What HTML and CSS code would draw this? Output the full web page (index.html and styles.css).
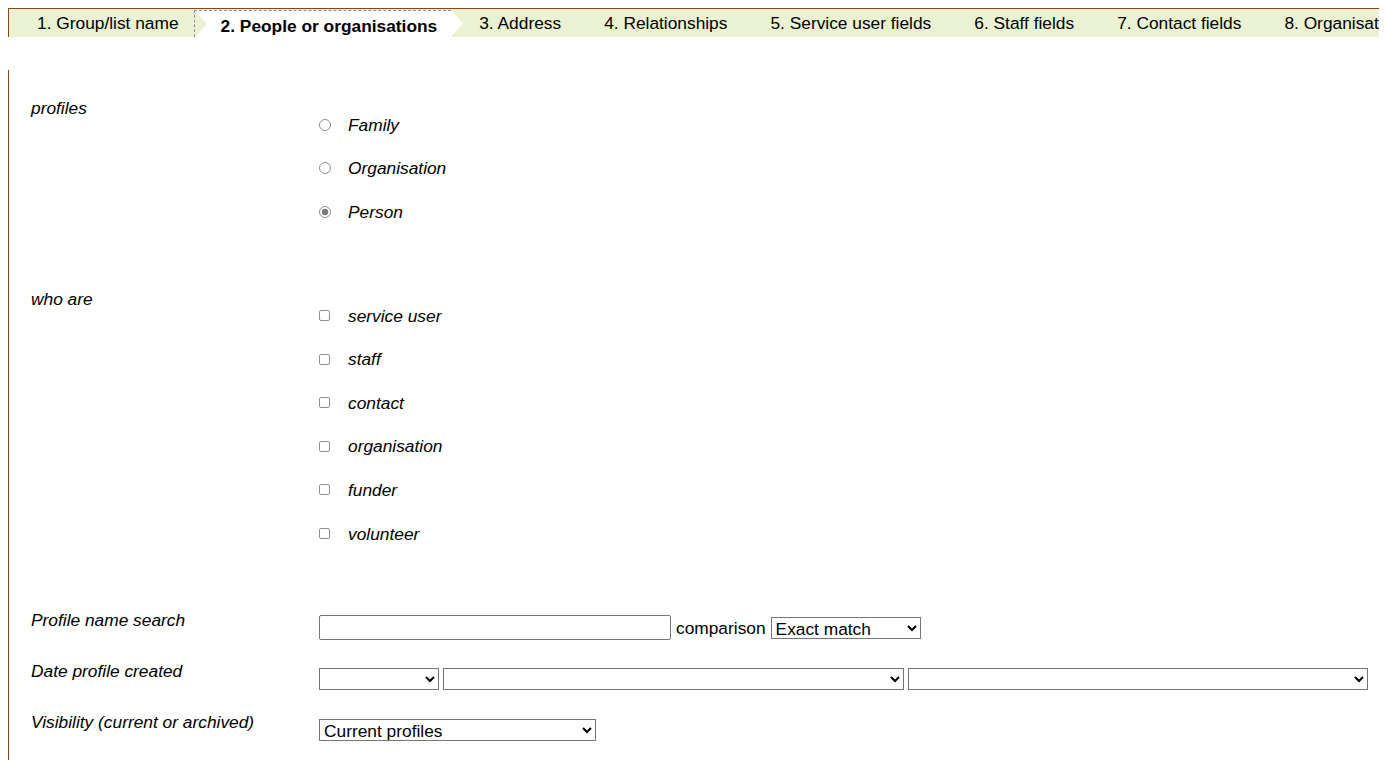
FILE: index.html
```html
<!DOCTYPE html>
<html lang="en">
<head>
<meta charset="utf-8">
<title>People or organisations</title>
<link rel="stylesheet" href="styles.css">
</head>
<body>
<nav class="tabs">
  <ul class="tab-list">
    <li class="tab prev">1. Group/list name</li>
    <li class="tab active">2. People or organisations</li>
    <li class="tab">3. Address</li>
    <li class="tab">4. Relationships</li>
    <li class="tab">5. Service user fields</li>
    <li class="tab">6. Staff fields</li>
    <li class="tab">7. Contact fields</li>
    <li class="tab">8. Organisation fields</li>
  </ul>
</nav>

<form class="content">
  <div class="section">
    <div class="section-label">profiles</div>
    <div class="options">
      <label class="option"><input type="radio" name="profile" class="radio"> Family</label>
      <label class="option"><input type="radio" name="profile" class="radio"> Organisation</label>
      <label class="option"><input type="radio" name="profile" class="radio" checked> Person</label>
    </div>
  </div>

  <div class="section">
    <div class="section-label">who are</div>
    <div class="options">
      <label class="option"><input type="checkbox" class="check"> service user</label>
      <label class="option"><input type="checkbox" class="check"> staff</label>
      <label class="option"><input type="checkbox" class="check"> contact</label>
      <label class="option"><input type="checkbox" class="check"> organisation</label>
      <label class="option"><input type="checkbox" class="check"> funder</label>
      <label class="option"><input type="checkbox" class="check"> volunteer</label>
    </div>
  </div>

  <div class="row">
    <div class="section-label">Profile name search</div>
    <div class="controls controls-search">
      <input type="text" class="text-input">
      <span class="inline-text">comparison</span>
      <select class="sel sel-compare"><option>Exact match</option><option>Starts with</option><option>Contains</option></select>
    </div>
  </div>

  <div class="row">
    <div class="section-label">Date profile created</div>
    <div class="controls controls-select">
      <select class="sel sel-date-a"><option></option></select>
      <select class="sel sel-date-b"><option></option></select>
      <select class="sel sel-date-c"><option></option></select>
    </div>
  </div>

  <div class="row">
    <div class="section-label">Visibility (current or archived)</div>
    <div class="controls controls-select">
      <select class="sel sel-visibility"><option>Current profiles</option><option>Archived profiles</option></select>
    </div>
  </div>
</form>
</body>
</html>
```

FILE: styles.css
```css
html {
  overflow: hidden;
}

body {
  margin: 8px;
  font-family: "Liberation Sans", Arial, sans-serif;
  font-size: 13pt;
  color: #000;
  background: #fff;
}

/* ---------- tab strip ---------- */
.tabs {
  width: calc(100vw - 8px);
}

.tab-list {
  display: flex;
  list-style: none;
  margin: 0;
  padding: 0;
  height: 28px;
  background: #eaf2d3;
  border-top: 1px solid #8b4513;
  border-left: 1px solid #8b4513;
  white-space: nowrap;
  overflow: hidden;
}

.tab {
  position: relative;
  flex: none;
  padding: 4px 15px 0 28px;
  line-height: 20px;
}

.tab.active {
  background: #fff;
  font-weight: bold;
  margin-top: 1px;
  border-top: 1px dashed #8a8a8a;
  border-left: 1px dashed #8a8a8a;
  padding: 5px 14px 0 26px;
}

.tab.prev::after {
  content: "";
  position: absolute;
  left: calc(100% + 1px);
  top: 2px;
  border-left: 12px solid #eaf2d3;
  border-top: 13px solid transparent;
  border-bottom: 13px solid transparent;
  z-index: 2;
}

.tab.active::after {
  content: "";
  position: absolute;
  left: 100%;
  top: -1px;
  border-left: 12px solid #fff;
  border-top: 13px solid transparent;
  border-bottom: 14px solid transparent;
  z-index: 2;
}

/* ---------- form ---------- */
.content {
  margin: 33px 0 0;
  border-left: 1px solid #8b4513;
  padding: 28px 0 40px 22px;
}

.section {
  display: grid;
  grid-template-columns: 288px 1fr;
  margin-bottom: 55px;
}

.section-label {
  font-style: italic;
  line-height: 20px;
}

.options {
  margin-top: 5px;
  display: flex;
  flex-direction: column;
}

.option {
  display: flex;
  align-items: center;
  height: 43.6px;
  font-style: italic;
  line-height: 20px;
}

.radio,
.check {
  appearance: none;
  -webkit-appearance: none;
  flex: none;
  margin: 0 17px 0 0;
  width: 12px;
  height: 12px;
  border: 1px solid #8f8f8f;
  background: #fff;
}

.radio {
  border-radius: 50%;
}

.radio:checked {
  background: radial-gradient(circle, #7a7a7a 0 3px, #fff 3.6px);
}

.check {
  width: 11px;
  height: 11px;
  margin-right: 18px;
  border-radius: 2px;
}

.check:checked {
  background: #7a7a7a;
}

.row {
  display: grid;
  grid-template-columns: 288px 1fr;
  height: 51px;
}

.controls {
  display: flex;
  align-items: center;
}

.controls-search {
  padding-top: 5px;
  height: 25px;
}

.controls-select {
  padding-top: 7px;
  height: 22px;
  gap: 4px;
}

.text-input {
  box-sizing: border-box;
  width: 352px;
  height: 25px;
  margin: 0;
  padding: 1px 3px;
  border: 1px solid #767676;
  border-radius: 2px;
  font: inherit;
}

.inline-text {
  margin: 0 5px;
  line-height: 20px;
}

.sel {
  box-sizing: border-box;
  height: 22px;
  margin: 0;
  padding: 0;
  border: 1px solid #767676;
  border-radius: 0;
  background-color: #fff;
  color: #000;
  font-family: "Liberation Sans", Arial, sans-serif;
  font-size: 13pt;
}

.sel-compare {
  width: 150px;
}

.sel-date-a {
  width: 120px;
}

.sel-date-b {
  width: 461px;
}

.sel-date-c {
  width: 460px;
}

.sel-visibility {
  width: 277px;
}
```
